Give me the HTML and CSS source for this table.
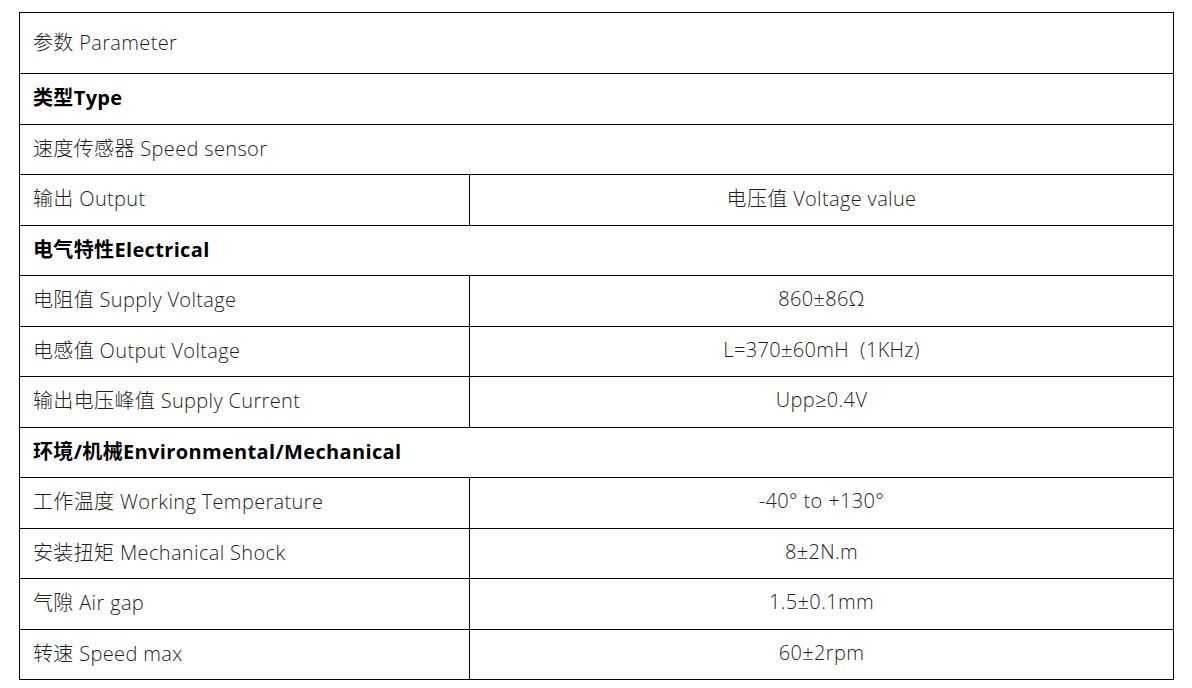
FILE: index.html
```html
<!DOCTYPE html>
<html>
<head>
<meta charset="utf-8">
<link rel="stylesheet" href="styles.css">
</head>
<body>
<table class="spec">
  <colgroup><col class="c1"><col class="c2"></colgroup>
  <tr class="r-head"><td colspan="2">参数 Parameter</td></tr>
  <tr class="sec"><td colspan="2">类型Type</td></tr>
  <tr><td colspan="2">速度传感器 Speed sensor</td></tr>
  <tr><td>输出 Output</td><td class="val">电压值 Voltage value</td></tr>
  <tr class="sec"><td colspan="2">电气特性Electrical</td></tr>
  <tr><td>电阻值 Supply Voltage</td><td class="val">860±86Ω</td></tr>
  <tr><td>电感值 Output Voltage</td><td class="val">L=370±60mH &nbsp;(1KHz)</td></tr>
  <tr><td>输出电压峰值 Supply Current</td><td class="val">Upp≥0.4V</td></tr>
  <tr class="sec"><td colspan="2">环境/机械Environmental/Mechanical</td></tr>
  <tr><td>工作温度 Working Temperature</td><td class="val">-40° to +130°</td></tr>
  <tr><td>安装扭矩 Mechanical Shock</td><td class="val">8±2N.m</td></tr>
  <tr><td>气隙 Air gap</td><td class="val">1.5±0.1mm</td></tr>
  <tr><td>转速 Speed max</td><td class="val">60±2rpm</td></tr>
</table>
</body>
</html>
```
FILE: styles.css
```css
html, body {
  margin: 0;
  background: #fff;
}
body {
  padding: 12px 0 0 19px;
  font-family: "Open Sans", "Noto Sans CJK SC", sans-serif;
  font-weight: 300;
  font-size: 20px;
  letter-spacing: 0.35px;
  color: #1e1e1e;
}
.spec {
  border-collapse: collapse;
  width: 1155px;
  table-layout: fixed;
}
.c1 { width: 450px; }
.spec td {
  border: 1px solid #000;
  height: 50.5px;
  padding: 0 13px 4px;
  box-sizing: border-box;
  vertical-align: middle;
  white-space: nowrap;
}
.spec tr.r-head td {
  height: 61px;
}
.spec tr.sec td {
  font-weight: 700;
  color: #000;
}
.spec td.val {
  text-align: center;
}
```
